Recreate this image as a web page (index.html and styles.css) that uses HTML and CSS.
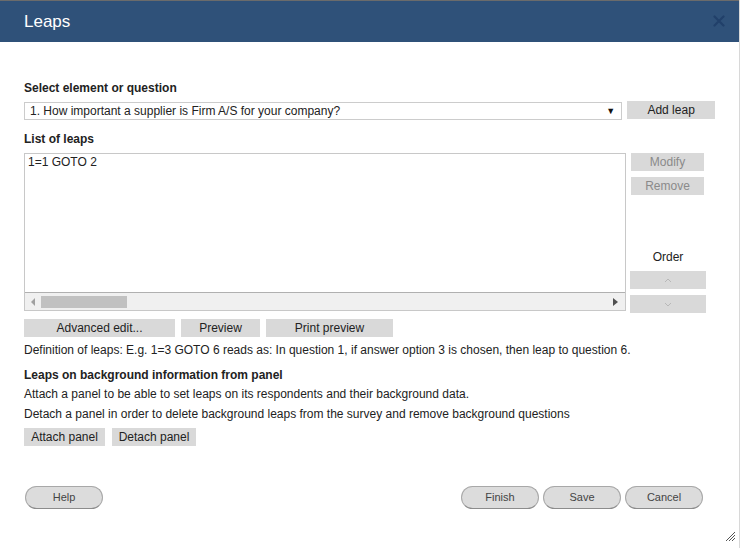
FILE: index.html
```html
<!DOCTYPE html>
<html>
<head>
<meta charset="utf-8">
<link rel="stylesheet" href="styles.css">
</head>
<body>
<div class="dialog">
  <div class="header">
    <span class="title">Leaps</span>
    <svg class="close" width="12" height="12" viewBox="0 0 12 12"><path d="M1.5 1.5L10.5 10.5M10.5 1.5L1.5 10.5" stroke="#21406a" stroke-width="2.2" stroke-linecap="round"/></svg>
  </div>
  <div class="content">
    <div class="label">Select element or question</div>
    <div class="select-row">
      <div class="select"><span>1. How important a supplier is Firm A/S for your company?</span><span class="caret">&#9660;</span></div>
      <div class="btn add">Add leap</div>
    </div>
    <div class="label list-label">List of leaps</div>
    <div class="list-row">
      <div class="listbox">
        <div class="list-items">1=1 GOTO 2</div>
        <div class="hscroll">
          <svg class="arrow" width="5" height="8" viewBox="0 0 5 8"><path d="M4 0L0 4L4 8Z" fill="#a0a0a0"/></svg>
          <div class="thumb"></div>
          <div class="track"></div>
          <svg class="arrow" width="5" height="8" viewBox="0 0 5 8"><path d="M0 0L5 4L0 8Z" fill="#505050"/></svg>
        </div>
      </div>
      <div class="side">
        <div class="btn dis">Modify</div>
        <div class="btn dis rem">Remove</div>
        <div class="order">Order</div>
        <div class="btn dis ord"><svg width="8" height="5" viewBox="0 0 8 5"><path d="M1 4L4 1L7 4" fill="none" stroke="#b8b8b8" stroke-width="1"/></svg></div>
        <div class="btn dis ord down"><svg width="8" height="5" viewBox="0 0 8 5"><path d="M1 1L4 4L7 1" fill="none" stroke="#b8b8b8" stroke-width="1"/></svg></div>
      </div>
    </div>
    <div class="btn-row">
      <div class="btn adv">Advanced edit...</div>
      <div class="btn prev">Preview</div>
      <div class="btn print">Print preview</div>
    </div>
    <div class="text def">Definition of leaps: E.g. 1=3 GOTO 6 reads as: In question 1, if answer option 3 is chosen, then leap to question 6.</div>
    <div class="label bg-label">Leaps on background information from panel</div>
    <div class="text t1">Attach a panel to be able to set leaps on its respondents and their background data.</div>
    <div class="text t2">Detach a panel in order to delete background leaps from the survey and remove background questions</div>
    <div class="btn-row panel-row">
      <div class="btn attach">Attach panel</div>
      <div class="btn detach">Detach panel</div>
    </div>
    <div class="footer">
      <div class="pill">Help</div>
      <div class="footer-right">
        <div class="pill">Finish</div>
        <div class="pill">Save</div>
        <div class="pill">Cancel</div>
      </div>
    </div>
  </div>
  <svg class="grip" width="11" height="11" viewBox="0 0 11 11"><path d="M10 1L1 10M10 4L4 10M10 7L7 10" stroke="#555" stroke-width="1"/></svg>
</div>
</body>
</html>
```

FILE: styles.css
```css
html, body {
  margin: 0;
  padding: 0;
  background: #fff;
}
body {
  font-family: "Liberation Sans", Arial, sans-serif;
  font-size: 12px;
  color: #222;
}
.dialog {
  position: relative;
  width: 740px;
  height: 548px;
  box-sizing: border-box;
  border-right: 1px solid #d8d8d8;
  overflow: hidden;
}
.header {
  height: 41px;
  background: #2f5179;
  border-top: 1px solid #6b6b6b;
  display: flex;
  align-items: center;
  justify-content: space-between;
  padding: 0 14px 0 24px;
}
.title {
  color: #fff;
  font-size: 17px;
}
.close {
  margin-top: -1px;
}
.content {
  padding: 38px 24px 0 24px;
}
.label {
  font-weight: bold;
  line-height: 16px;
  height: 16px;
}
.select-row {
  display: flex;
  margin-top: 6px;
  align-items: flex-start;
}
.select {
  width: 600px;
  height: 18px;
  box-sizing: border-box;
  border: 1px solid #cccccc;
  display: flex;
  justify-content: space-between;
  align-items: center;
  padding: 0 6px 0 5px;
  line-height: 16px;
}
.caret {
  font-size: 9px;
  color: #111;
}
.btn {
  background: #d9d9d9;
  height: 18px;
  line-height: 18px;
  text-align: center;
  color: #222;
  box-sizing: border-box;
}
.add {
  width: 88px;
  margin-left: 5px;
  margin-top: -1px;
}
.list-label {
  margin-top: 11px;
}
.list-row {
  display: flex;
  align-items: flex-start;
  height: 158px;
  margin-top: 6px;
}
.listbox {
  width: 602px;
  height: 158px;
  box-sizing: border-box;
  border: 1px solid #c8c8c8;
  display: flex;
  flex-direction: column;
}
.list-items {
  flex: 1;
  padding: 2px 3px;
  line-height: 13px;
}
.hscroll {
  height: 17px;
  border-top: 1px solid #b0b0b0;
  background: #f0f0f0;
  display: flex;
  align-items: center;
  padding: 0 7px 0 6px;
}
.thumb {
  width: 86px;
  height: 12px;
  background: #c1c1c1;
  margin-left: 5px;
}
.track {
  flex: 1;
}
.side {
  width: 76px;
  height: 160px;
  margin-left: 4px;
  display: flex;
  flex-direction: column;
}
.dis {
  color: #8a8a8a;
  width: 73px;
  margin-left: 1px;
}
.rem {
  margin-top: 6px;
}
.order {
  margin-top: auto;
  text-align: center;
  line-height: 16px;
  color: #222;
}
.ord {
  width: 76px;
  margin-left: 0;
  margin-top: 6px;
  display: flex;
  align-items: center;
  justify-content: center;
}
.btn-row {
  display: flex;
  margin-top: 8px;
}
.adv { width: 151px; }
.prev { width: 79px; margin-left: 6px; }
.print { width: 127px; margin-left: 6px; }
.text {
  line-height: 16px;
  height: 16px;
}
.def { margin-top: 5px; }
.bg-label { margin-top: 9px; }
.t1 { margin-top: 3px; }
.t2 { margin-top: 4px; }
.panel-row { margin-top: 6px; }
.attach { width: 81px; }
.detach { width: 84px; margin-left: 7px; }
.footer {
  display: flex;
  justify-content: space-between;
  margin-top: 40px;
  padding: 0 12px 0 1px;
}
.footer-right {
  display: flex;
  gap: 4px;
}
.pill {
  width: 78px;
  height: 23px;
  box-sizing: border-box;
  border: 1px solid #a8a8a8;
  border-bottom-color: #8c8c8c;
  border-radius: 12px;
  background: #dcdcdc;
  color: #444;
  text-align: center;
  line-height: 21px;
  font-size: 11px;
}
.grip {
  position: absolute;
  right: 3px;
  bottom: 6px;
}
```
